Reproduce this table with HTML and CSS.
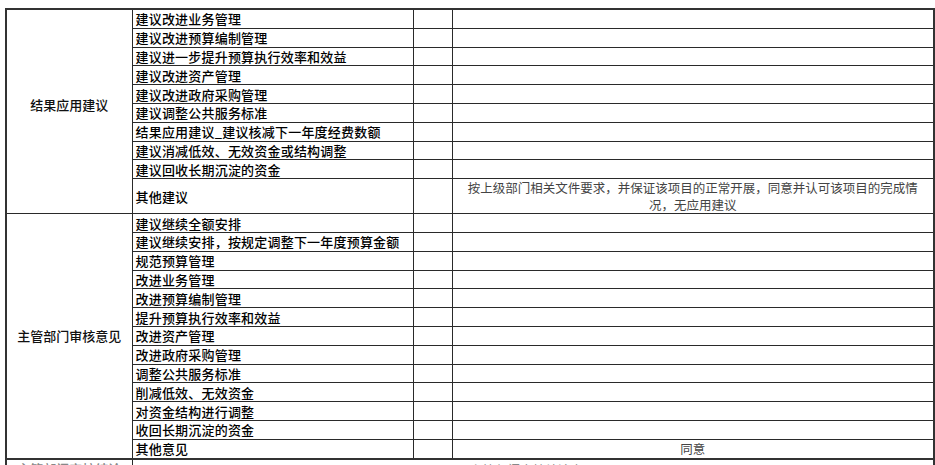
FILE: index.html
```html
<!DOCTYPE html>
<html lang="zh">
<head>
<meta charset="utf-8">
<link rel="stylesheet" href="styles.css">
</head>
<body>
<div class="page">
<table class="sheet">
<colgroup>
<col class="c1"><col class="c2"><col class="c3"><col class="c4">
</colgroup>
<tbody>
<tr><td class="label first" rowspan="10">结果应用建议</td><td class="item">建议改进业务管理</td><td></td><td></td></tr>
<tr><td class="item">建议改进预算编制管理</td><td></td><td></td></tr>
<tr><td class="item">建议进一步提升预算执行效率和效益</td><td></td><td></td></tr>
<tr><td class="item">建议改进资产管理</td><td></td><td></td></tr>
<tr><td class="item">建议改进政府采购管理</td><td></td><td></td></tr>
<tr><td class="item">建议调整公共服务标准</td><td></td><td></td></tr>
<tr><td class="item">结果应用建议_建议核减下一年度经费数额</td><td></td><td></td></tr>
<tr><td class="item">建议消减低效、无效资金或结构调整</td><td></td><td></td></tr>
<tr><td class="item">建议回收长期沉淀的资金</td><td></td><td></td></tr>
<tr class="tall"><td class="item">其他建议</td><td></td><td class="note">按上级部门相关文件要求，并保证该项目的正常开展，同意并认可该项目的完成情况，无应用建议</td></tr>
<tr><td class="label" rowspan="13">主管部门审核意见</td><td class="item">建议继续全额安排</td><td></td><td></td></tr>
<tr><td class="item">建议继续安排，按规定调整下一年度预算金额</td><td></td><td></td></tr>
<tr><td class="item">规范预算管理</td><td></td><td></td></tr>
<tr><td class="item">改进业务管理</td><td></td><td></td></tr>
<tr><td class="item">改进预算编制管理</td><td></td><td></td></tr>
<tr><td class="item">提升预算执行效率和效益</td><td></td><td></td></tr>
<tr><td class="item">改进资产管理</td><td></td><td></td></tr>
<tr><td class="item">改进政府采购管理</td><td></td><td></td></tr>
<tr><td class="item">调整公共服务标准</td><td></td><td></td></tr>
<tr><td class="item">削减低效、无效资金</td><td></td><td></td></tr>
<tr><td class="item">对资金结构进行调整</td><td></td><td></td></tr>
<tr><td class="item">收回长期沉淀的资金</td><td></td><td></td></tr>
<tr><td class="item">其他意见</td><td></td><td class="note">同意</td></tr>
<tr class="next"><td class="label cut">主管部门审核结论</td><td colspan="3" class="note cut">主管部门审核结论意见</td></tr>
</tbody>
</table>
</div>
</body>
</html>
```
FILE: styles.css
```css
html, body {
  margin: 0;
  padding: 0;
  background: #fff;
  overflow: hidden;
  height: 465px;
}
.page {
  padding: 8px 0 0 5px;
  font-family: "Noto Sans CJK SC", "Liberation Sans", sans-serif;
}
.sheet {
  border-collapse: collapse;
  table-layout: fixed;
  width: 928px;
  border: 2px solid #333;
}
.c1 { width: 126px; }
.c2 { width: 281px; }
.c3 { width: 39px; }
.c4 { width: 482px; }
.sheet td {
  border: 1px solid #2a2a2a;
  height: 17.8px;
  padding: 0;
  font-size: 13px;
  line-height: 15px;
  font-weight: 500;
  color: #000;
  vertical-align: middle;
  overflow: hidden;
  white-space: nowrap;
}
.sheet .tall td { height: 34px; }
.sheet td.label {
  text-align: center;
  font-size: 13px;
  color: #111;
  border-left: 2px solid #333;
}
.sheet td.label.first {
  padding-bottom: 14px;
}
.sheet td.item {
  padding-left: 3px;
  letter-spacing: 0.2px;
}
.sheet td.note {
  text-align: center;
  font-size: 12.5px;
  line-height: 17px;
  font-weight: 400;
  color: #444;
  white-space: normal;
  padding: 0 10px;
}
.sheet .next td {
  height: 30px;
  vertical-align: top;
  border-top: 2px solid #333;
}
.sheet td.cut {
  padding-top: 1px;
  color: #888;
  white-space: nowrap;
}
```
